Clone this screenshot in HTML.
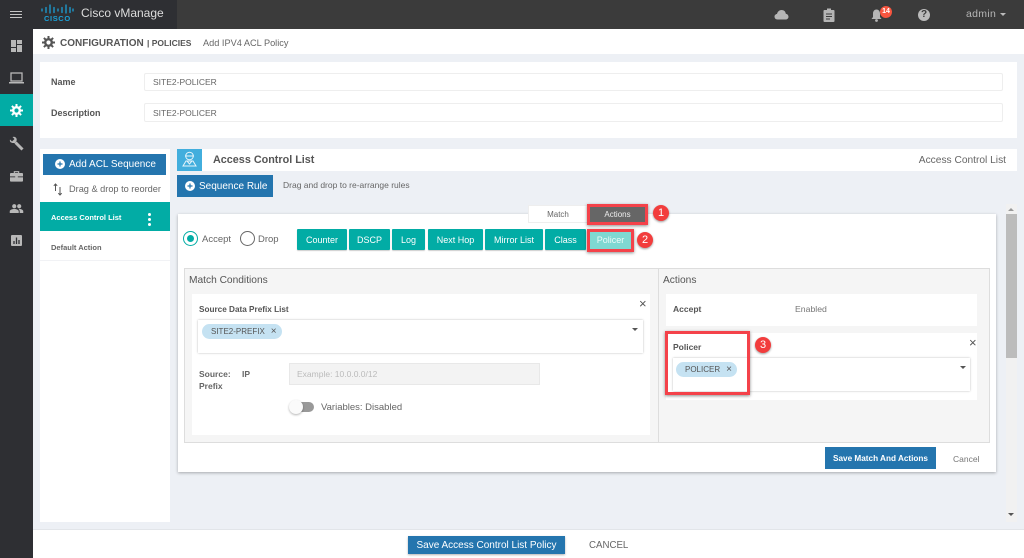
<!DOCTYPE html>
<html><head><meta charset="utf-8"><style>
html,body{margin:0;padding:0;width:1024px;height:558px;overflow:hidden;background:#edf0f5;font-family:"Liberation Sans",sans-serif;color:#555}
.a{position:absolute;box-sizing:border-box}
.t{position:absolute;white-space:nowrap;line-height:1}
.btn{position:absolute;box-sizing:border-box;background:#02aca5;color:#fff;font-size:9px;text-align:center;height:21px;line-height:22px;top:229px;border-radius:1px;box-shadow:0 1px 1px rgba(0,0,0,.2)}
.blue{background:#2475ae;color:#fff}
.red{border:3px solid #f4424a;box-shadow:0 1px 3px rgba(0,0,0,.45)}
.num{position:absolute;width:16px;height:16px;border-radius:50%;background:#f23d3d;color:#fff;font-size:11px;line-height:16px;text-align:center;box-shadow:0 1px 2px rgba(0,0,0,.4)}
.chip{position:absolute;box-sizing:border-box;background:#c5e2f2;border-radius:8px;height:15px;font-size:8px;line-height:15px;color:#555;white-space:nowrap}
</style></head><body>

<!-- top bar -->
<div class="a" style="left:0;top:0;width:1024px;height:29px;background:#3b3b3b"></div>
<div class="a" style="left:0;top:0;width:177px;height:29px;background:#2e2f33"></div>
<div class="a" style="left:0;top:29px;width:33px;height:529px;background:#2e2f33"></div>
<div class="a" style="left:10px;top:11px;width:12px;height:1px;background:#c4c4c4"></div>
<div class="a" style="left:10px;top:14px;width:12px;height:1px;background:#c4c4c4"></div>
<div class="a" style="left:10px;top:17px;width:12px;height:1px;background:#c4c4c4"></div>
<svg class="a" style="left:41px;top:4px" width="33" height="11" viewBox="0 0 33 11"><g stroke="#1ba0d7" stroke-width="1.300" stroke-linecap="round"><path d="M1 5v2M5 3.500v5M9 1v8M13 3.500v5M17 5v2M21 3.500v5M25 1v8M29 3.500v5M32 5v2"/></g></svg>
<div class="t" style="left:44px;top:15px;font-size:7.500px;font-weight:bold;color:#1ba0d7;letter-spacing:.6px">CISCO</div>
<div class="t" style="left:81px;top:7px;font-size:12px;color:#ddd">Cisco vManage</div>

<svg class="a" style="left:774px;top:9px" width="15" height="11" viewBox="0 0 15 11"><path d="M3.500 10.500C1.500 10.500 .5 9 .5 7.500S2 5 3 5C3.500 2.500 5.500 1 7.500 1c2.500 0 4 1.500 4.300 3.700C13.500 5 14.500 6.200 14.500 7.700c0 1.500-1.200 2.800-3 2.800z" fill="#b5b5b5"/></svg>
<svg class="a" style="left:823px;top:8px" width="12" height="14" viewBox="0 0 12 14"><rect x=".5" y="2" width="11" height="12" rx="1" fill="#b5b5b5"/><rect x="4" y="0.500" width="4" height="3" fill="#b5b5b5"/><path d="M3 6h6M3 8.500h6M3 11h4" stroke="#3b3b3b" stroke-width="1"/></svg>
<svg class="a" style="left:871px;top:9px" width="11" height="13" viewBox="0 0 11 13"><path d="M5.500 0.500C7.500 0.500 9 2.200 9 4.500V8l1.500 2H.5L2 8V4.500C2 2.200 3.500.5 5.500.5z" fill="#b5b5b5"/><circle cx="5.500" cy="11.500" r="1.400" fill="#b5b5b5"/></svg>
<div class="a" style="left:880px;top:6px;width:12px;height:12px;border-radius:50%;background:#f8553f;color:#fff;font-size:7px;font-weight:bold;line-height:12px;text-align:center">14</div>
<div class="a" style="left:918px;top:9px;width:12px;height:12px;border-radius:50%;background:#bbb;color:#3b3b3b;font-size:10px;font-weight:bold;line-height:12px;text-align:center">?</div>
<div class="t" style="left:966px;top:9px;font-size:10.500px;color:#b5b5b5;letter-spacing:.3px">admin</div>
<div class="a" style="left:1000px;top:13px;width:0;height:0;border-left:3.500px solid transparent;border-right:3.500px solid transparent;border-top:3.500px solid #bbb"></div>

<!-- sidebar -->
<svg class="a" style="left:11px;top:40px" width="11" height="12" viewBox="0 0 11 12" fill="#b8b8b8"><rect width="5" height="7"/><rect x="6" width="5" height="4"/><rect y="8" width="5" height="4"/><rect x="6" y="5" width="5" height="7"/></svg>
<svg class="a" style="left:9px;top:72px" width="15" height="12" viewBox="0 0 15 12"><rect x="2" y="1" width="11" height="8" fill="none" stroke="#b8b8b8" stroke-width="1.300"/><rect x="0" y="10" width="15" height="1.500" fill="#b8b8b8"/></svg>
<div class="a" style="left:0;top:94px;width:33px;height:32px;background:#02aca5"></div>
<svg class="a" style="left:10px;top:104px" width="13" height="13" viewBox="0 0 13 13"><circle cx="6.500" cy="6.500" r="3.300" fill="none" stroke="#fff" stroke-width="2.400"/><path d="M6.500 0v3M6.500 10v3M0 6.500h3M10 6.500h3M1.900 1.900l2 2M9.100 9.100l2 2M1.900 11.100l2-2M9.100 3.900l2-2" stroke="#fff" stroke-width="2"/></svg>
<svg class="a" style="left:9px;top:136px" width="15" height="15" viewBox="0 0 15 15"><path d="M13.500 13.500L6.500 6.500" stroke="#b8b8b8" stroke-width="3"/><path d="M1 3.500L3 5.500 5.500 3 3.500 1C6 0 8.500 2 7.500 5L6 7 3.500 7C1.500 6.500.5 5.500 1 3.500z" fill="#b8b8b8"/></svg>
<svg class="a" style="left:10px;top:170px" width="13" height="12" viewBox="0 0 15 13"><path d="M5 3V1.500h5V3" fill="none" stroke="#b8b8b8" stroke-width="1.300"/><rect y="3" width="15" height="10" rx="1" fill="#b8b8b8"/><rect y="7" width="15" height="1" fill="#2e2f33"/><rect x="6" y="6" width="3" height="3" fill="#b8b8b8"/></svg>
<svg class="a" style="left:9px;top:204px" width="15" height="9" viewBox="0 0 15 10" fill="#b8b8b8"><circle cx="5" cy="2.500" r="2.300"/><circle cx="10.500" cy="2.500" r="2.300"/><path d="M0 10V8c0-1.500 2.500-2.500 5-2.500S10 6.500 10 8v2zM11 10V8c0-1-.5-1.700-1.200-2.400 2.500-.4 5.200.8 5.200 2.400v2z"/></svg>
<svg class="a" style="left:11px;top:235px" width="11" height="11" viewBox="0 0 11 11"><rect width="11" height="11" rx="1" fill="#b8b8b8"/><path d="M3 9V6M5.500 9V2.500M8 9V5" stroke="#2e2f33" stroke-width="1.300"/></svg>

<!-- header -->
<div class="a" style="left:33px;top:29px;width:991px;height:25px;background:#fff"></div>
<svg class="a" style="left:42px;top:36px" width="13" height="13" viewBox="0 0 13 13"><circle cx="6.500" cy="6.500" r="3.300" fill="none" stroke="#555" stroke-width="2.400"/><path d="M6.500 0v3M6.500 10v3M0 6.500h3M10 6.500h3M1.900 1.900l2 2M9.100 9.100l2 2M1.900 11.100l2-2M9.100 3.900l2-2" stroke="#555" stroke-width="2"/></svg>
<div class="t" style="left:60px;top:39px;font-size:10px;font-weight:bold;color:#555">CONFIGURATION</div>
<div class="t" style="left:147px;top:39px;font-size:8.500px;color:#555;font-weight:bold">|&nbsp;POLICIES</div>
<div class="t" style="left:203px;top:39px;font-size:9.200px;color:#666">Add IPV4 ACL Policy</div>

<!-- name panel -->
<div class="a" style="left:40px;top:62px;width:977px;height:76px;background:#fff"></div>
<div class="t" style="left:51px;top:78px;font-size:9px;font-weight:bold;color:#555">Name</div>
<div class="t" style="left:51px;top:109px;font-size:9px;font-weight:bold;color:#555">Description</div>
<div class="a" style="left:144px;top:73px;width:859px;height:18px;border:1px solid #eee;border-radius:2px;font-size:8.500px;line-height:17px;padding-left:8px;color:#666">SITE2-POLICER</div>
<div class="a" style="left:144px;top:103px;width:859px;height:19px;border:1px solid #eee;border-radius:2px;font-size:8.500px;line-height:19px;padding-left:8px;color:#666">SITE2-POLICER</div>

<!-- left column -->
<div class="a" style="left:40px;top:149px;width:130px;height:373px;background:#fff"></div>
<div class="a blue" style="left:43px;top:154px;width:123px;height:21px"></div>
<svg class="a" style="left:55px;top:159px" width="10" height="10" viewBox="0 0 10 10"><circle cx="5" cy="5" r="5" fill="#fff"/><path d="M5 2.500v5M2.500 5h5" stroke="#2475ae" stroke-width="1.200"/></svg>
<div class="t" style="left:69px;top:160px;font-size:10px;color:#fff">Add ACL Sequence</div>
<svg class="a" style="left:53px;top:183px" width="10" height="13" viewBox="0 0 10 13"><path d="M2.500 8V1M.8 2.800L2.500 1l1.700 1.800M7 4v8M5.300 10.200L7 12l1.700-1.800" fill="none" stroke="#555" stroke-width="1"/></svg>
<div class="t" style="left:69px;top:185px;font-size:9.200px;color:#666">Drag &amp; drop to reorder</div>
<div class="a" style="left:40px;top:202px;width:130px;height:29px;background:#02aca5"></div>
<div class="t" style="left:51px;top:214px;font-size:7.500px;font-weight:bold;color:#fff">Access Control List</div>
<div class="a" style="left:148px;top:213px;width:3px;height:3px;border-radius:50%;background:#fff"></div>
<div class="a" style="left:148px;top:218px;width:3px;height:3px;border-radius:50%;background:#fff"></div>
<div class="a" style="left:148px;top:223px;width:3px;height:3px;border-radius:50%;background:#fff"></div>
<div class="t" style="left:51px;top:244px;font-size:7.500px;font-weight:bold;color:#666">Default Action</div>
<div class="a" style="left:40px;top:260px;width:130px;height:1px;background:#f1f2f5"></div>

<!-- title -->
<div class="a" style="left:177px;top:149px;width:25px;height:22px;background:#42aedd"></div>
<svg class="a" style="left:182px;top:151px" width="15" height="17" viewBox="0 0 15 17"><circle cx="7.500" cy="5" r="3.800" fill="none" stroke="#e6f5fb" stroke-width="1"/><path d="M3 5h9M1 15l3-5h7l3 5zM5 10l2.500 3L10 10" fill="none" stroke="#e6f5fb" stroke-width="1"/></svg>
<div class="a" style="left:202px;top:149px;width:815px;height:22px;background:#fff"></div>
<div class="t" style="left:213px;top:155px;font-size:10.800px;font-weight:bold;color:#555">Access Control List</div>
<div class="t" style="right:18px;top:156px;font-size:10.200px;color:#666">Access Control List</div>
<div class="a blue" style="left:177px;top:175px;width:96px;height:22px"></div>
<svg class="a" style="left:185px;top:181px" width="10" height="10" viewBox="0 0 10 10"><circle cx="5" cy="5" r="5" fill="#fff"/><path d="M5 2.500v5M2.500 5h5" stroke="#2475ae" stroke-width="1.200"/></svg>
<div class="t" style="left:199px;top:182px;font-size:10px;color:#fff">Sequence Rule</div>
<div class="t" style="left:283px;top:181px;font-size:8.500px;color:#666">Drag and drop to re-arrange rules</div>

<!-- scrollbar -->
<div class="a" style="left:1006px;top:204px;width:11px;height:318px;background:#f1f1f1"></div>
<div class="a" style="left:1006px;top:214px;width:11px;height:144px;background:#bcbcbc"></div>
<div class="a" style="left:1008px;top:208px;width:0;height:0;border-left:3px solid transparent;border-right:3px solid transparent;border-bottom:3px solid #999"></div>
<div class="a" style="left:1008px;top:513px;width:0;height:0;border-left:3px solid transparent;border-right:3px solid transparent;border-top:3px solid #555"></div>

<!-- card -->
<div class="a" style="left:178px;top:214px;width:818px;height:258px;background:#fff;box-shadow:0 1px 3px rgba(0,0,0,.3)"></div>
<div class="a" style="left:528px;top:205px;width:60px;height:18px;background:#fff;border:1px solid #eee;font-size:8px;line-height:17px;text-align:center;color:#666">Match</div>
<div class="a" style="left:590px;top:207px;width:55px;height:15px;background:#666;font-size:8px;line-height:15px;text-align:center;color:#eee">Actions</div>
<div class="a red" style="left:587px;top:204px;width:61px;height:21px"></div>
<div class="num" style="left:653px;top:205px">1</div>

<div class="a" style="left:183px;top:231px;width:15px;height:15px;border-radius:50%;border:1.500px solid #02aca5"></div>
<div class="a" style="left:187px;top:235px;width:7px;height:7px;border-radius:50%;background:#02aca5"></div>
<div class="t" style="left:202px;top:235px;font-size:9.500px;color:#666">Accept</div>
<div class="a" style="left:240px;top:231px;width:15px;height:15px;border-radius:50%;border:1.500px solid #666"></div>
<div class="t" style="left:258px;top:235px;font-size:9.500px;color:#666">Drop</div>

<div class="btn" style="left:297px;width:50px">Counter</div>
<div class="btn" style="left:349px;width:41px">DSCP</div>
<div class="btn" style="left:392px;width:33px">Log</div>
<div class="btn" style="left:428px;width:55px">Next Hop</div>
<div class="btn" style="left:485px;width:58px">Mirror List</div>
<div class="btn" style="left:545px;width:41px">Class</div>
<div class="a" style="left:590px;top:232px;width:41px;height:17px;background:#7fd8d2;color:#eefafa;font-size:9px;line-height:17px;text-align:center">Policer</div>
<div class="a red" style="left:587px;top:229px;width:47px;height:23px"></div>
<div class="num" style="left:637px;top:232px">2</div>

<!-- inner panel -->
<div class="a" style="left:184px;top:268px;width:806px;height:175px;background:#f5f5f5;border:1px solid #ddd"></div>
<div class="a" style="left:658px;top:269px;width:1px;height:173px;background:#ddd"></div>
<div class="t" style="left:189px;top:276px;font-size:10.200px;color:#555">Match Conditions</div>
<div class="t" style="left:663px;top:276px;font-size:10.200px;color:#555">Actions</div>

<div class="a" style="left:192px;top:294px;width:458px;height:141px;background:#fff"></div>
<div class="t" style="left:199px;top:306px;font-size:8.200px;font-weight:bold;color:#555">Source Data Prefix List</div>
<div class="t" style="left:639px;top:297px;font-size:13px;color:#555">×</div>
<div class="a" style="left:198px;top:320px;width:445px;height:33px;background:#fff;box-shadow:0 0 2px rgba(0,0,0,.28)"></div>
<div class="chip" style="left:202px;top:324px;width:80px;padding-left:9px">SITE2-PREFIX<span style="margin-left:6px;font-size:10px">×</span></div>
<div class="a" style="left:632px;top:328px;width:0;height:0;border-left:3px solid transparent;border-right:3px solid transparent;border-top:3px solid #555"></div>

<div class="t" style="left:199px;top:370px;font-size:8.500px;font-weight:bold;color:#666">Source:</div>
<div class="t" style="left:242px;top:370px;font-size:8.500px;font-weight:bold;color:#666">IP</div>
<div class="t" style="left:199px;top:382px;font-size:8.500px;font-weight:bold;color:#666">Prefix</div>
<div class="a" style="left:289px;top:363px;width:251px;height:22px;background:#f3f3f3;border:1px solid #e8e8e8;font-size:8.500px;line-height:20px;padding-left:7px;color:#bbb">Example: 10.0.0.0/12</div>
<div class="a" style="left:292px;top:402px;width:22px;height:10px;border-radius:5px;background:#999"></div>
<div class="a" style="left:289px;top:400px;width:14px;height:14px;border-radius:50%;background:#fafafa;box-shadow:0 1px 2px rgba(0,0,0,.3)"></div>
<div class="t" style="left:321px;top:403px;font-size:9.500px;color:#666">Variables: Disabled</div>

<div class="a" style="left:666px;top:294px;width:311px;height:32px;background:#fff"></div>
<div class="t" style="left:673px;top:305px;font-size:8.500px;font-weight:bold;color:#555">Accept</div>
<div class="t" style="left:795px;top:305px;font-size:8.700px;color:#777">Enabled</div>
<div class="a" style="left:666px;top:333px;width:311px;height:67px;background:#fff"></div>
<div class="t" style="left:673px;top:343px;font-size:8.500px;font-weight:bold;color:#555">Policer</div>
<div class="t" style="left:969px;top:336px;font-size:13px;color:#555">×</div>
<div class="a" style="left:673px;top:358px;width:297px;height:33px;background:#fff;box-shadow:0 0 2px rgba(0,0,0,.28)"></div>
<div class="chip" style="left:676px;top:362px;width:61px;padding-left:9px">POLICER<span style="margin-left:6px;font-size:10px">×</span></div>
<div class="a" style="left:960px;top:366px;width:0;height:0;border-left:3px solid transparent;border-right:3px solid transparent;border-top:3px solid #555"></div>
<div class="a red" style="left:665px;top:331px;width:85px;height:64px"></div>
<div class="num" style="left:755px;top:337px">3</div>

<div class="a blue" style="left:825px;top:447px;width:111px;height:22px;font-size:8.200px;font-weight:bold;line-height:23px;text-align:center">Save Match And Actions</div>
<div class="t" style="left:953px;top:455px;font-size:8.500px;color:#777">Cancel</div>

<!-- footer -->
<div class="a" style="left:33px;top:529px;width:991px;height:29px;background:#fff;border-top:1px solid #e2e5e9"></div>
<div class="a blue" style="left:408px;top:536px;width:157px;height:18px;font-size:10px;line-height:19px;text-align:center;box-shadow:0 1px 2px rgba(0,0,0,.3)">Save Access Control List Policy</div>
<div class="t" style="left:589px;top:541px;font-size:9.700px;color:#666">CANCEL</div>
</body></html>
